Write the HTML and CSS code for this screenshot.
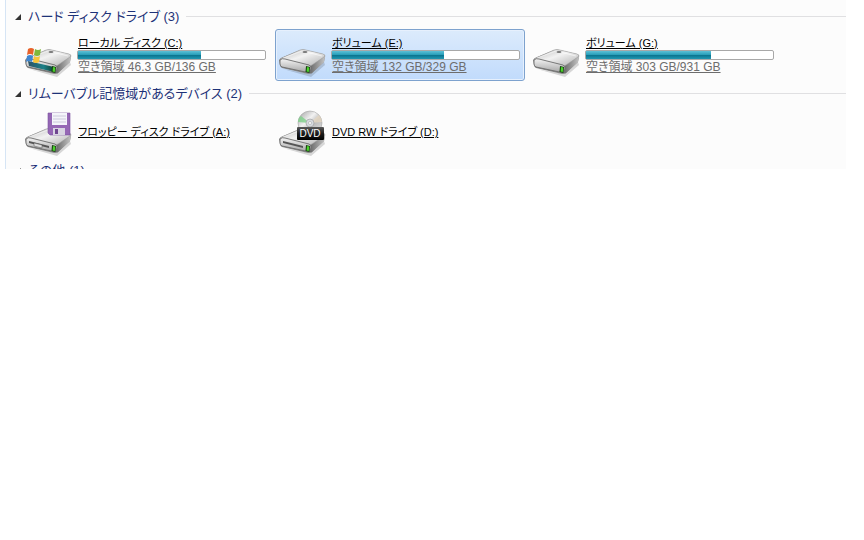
FILE: index.html
```html
<!DOCTYPE html>
<html lang="ja">
<head>
  <meta charset="UTF-8" />
  <meta name="viewport" content="width=device-width, initial-scale=1" />
  <title>コンピューター</title>
  <link rel="stylesheet" href="styles.css">
</head>
<body>
  <!-- shared icon parts -->
  <svg class="defs" width="0" height="0" aria-hidden="true">
    <defs>
      <linearGradient id="top" x1="0" y1="0" x2="1" y2="1">
        <stop offset="0" stop-color="#b4b4b4" />
        <stop offset="0.45" stop-color="#f2f2f2" />
        <stop offset="1" stop-color="#b0b0b0" />
      </linearGradient>
      <linearGradient id="front" x1="0" y1="0" x2="0" y2="1">
        <stop offset="0" stop-color="#f4f4f4" />
        <stop offset="1" stop-color="#a2a2a2" />
      </linearGradient>
      <linearGradient id="side" x1="0" y1="0" x2="1" y2="0">
        <stop offset="0" stop-color="#6a6a6a" />
        <stop offset="1" stop-color="#c4c4c4" />
      </linearGradient>
      <linearGradient id="glass" x1="0" y1="0" x2="1" y2="0">
        <stop offset="0" stop-color="#2b5268" />
        <stop offset="0.6" stop-color="#1c8087" />
        <stop offset="1" stop-color="#123e32" />
      </linearGradient>
      <linearGradient id="disc" x1="0" y1="0" x2="1" y2="1">
        <stop offset="0" stop-color="#9c9c9c" />
        <stop offset="0.4" stop-color="#f2f2f2" />
        <stop offset="0.6" stop-color="#bcbcbc" />
        <stop offset="1" stop-color="#e4e4e4" />
      </linearGradient>
      <linearGradient id="label" x1="0" y1="0" x2="0" y2="1">
        <stop offset="0" stop-color="#5a5a5a" />
        <stop offset="0.5" stop-color="#1c1c1c" />
        <stop offset="1" stop-color="#000" />
      </linearGradient>
      <g id="drive">
        <path d="M5 38 L33 46 L47 34 L46 31 L32 43Z" fill="#000" opacity="0.15" />
        <path d="M1 29 Q2 27 5 26 L22 19 Q25 18 28 19 L45 23 Q48 24 47 26 L46 31 L34 42 Q32 43 30 43 L4 37 Q2 36 2 34Z" fill="#8c8c8c" />
        <path d="M33 35 L47 25 L46 31 L34 42 Q33 43 32 42Z" fill="url(#side)" />
        <path d="M2 28 L22 19 Q25 18 28 19 L45 23 Q48 24 46 26 L34 34 Q32 35 30 35 L4 30Z" fill="url(#top)" stroke="#9a9a9a" stroke-width="0.5" />
        <path d="M5 27 L24 20 L44 25" fill="none" stroke="#fff" stroke-width="0.8" opacity="0.7" />
        <ellipse cx="27" cy="21" rx="2.5" ry="1" fill="#777" />
        <path d="M2 29 Q4 27 7 28 L31 34 Q33 35 33 37 L32 42 L4 36 Q2 35 2 33Z" fill="url(#front)" stroke="#6c6c6c" stroke-width="0.9" />
      </g>
      <g id="lamp">
        <path d="M28 35 L32 36 L31.5 42 L27.5 41Z" fill="#17420f" />
        <path d="M29 36 L31.2 36.5 L30.8 41 L28.6 40.5Z" fill="#4bd32c" />
      </g>
    </defs>
  </svg>

  <main class="pane">
    <section class="group">
      <div class="group-header">
        <button class="toggle" type="button" aria-label="折りたたむ" aria-expanded="true">
          <svg width="6" height="6" viewBox="0 0 6 6"><path d="M6 0 V6 H0Z" fill="#333" /></svg>
        </button>
        <h2>ハード ディスク ドライブ (3)</h2>
        <span class="rule"></span>
      </div>
      <ul class="tiles">
        <li>
          <a class="tile" href="#c">
            <svg class="icon" viewBox="0 0 48 48">
              <use href="#drive" />
              <path d="M4 30 L30 36 L30 41 L5 35Z" fill="url(#glass)" />
              <use href="#lamp" />
              <path d="M4 18 Q7 16 10 18 L9 24 Q6 22 3 24Z" fill="#e8622a" />
              <path d="M11 18 Q14 20 17 18 L16 24 Q13 26 10 24Z" fill="#7fb83a" />
              <path d="M3 25 Q6 23 9 25 L8 31 Q5 29 2 31Z" fill="#3f86d0" />
              <path d="M10 25 Q13 27 16 25 L15 31 Q12 33 9 31Z" fill="#f7c53a" />
            </svg>
            <span class="info">
              <span class="name">ローカル ディスク (C:)</span>
              <span class="bar"><span class="used" style="width: 66%"></span></span>
              <span class="free">空き領域 46.3 GB/136 GB</span>
            </span>
          </a>
        </li>
        <li>
          <a class="tile selected" href="#e">
            <svg class="icon" viewBox="0 0 48 48">
              <use href="#drive" />
              <use href="#lamp" />
            </svg>
            <span class="info">
              <span class="name">ボリューム (E:)</span>
              <span class="bar"><span class="used" style="width: 60%"></span></span>
              <span class="free">空き領域 132 GB/329 GB</span>
            </span>
          </a>
        </li>
        <li>
          <a class="tile" href="#g">
            <svg class="icon" viewBox="0 0 48 48">
              <use href="#drive" />
              <use href="#lamp" />
            </svg>
            <span class="info">
              <span class="name">ボリューム (G:)</span>
              <span class="bar"><span class="used" style="width: 67%"></span></span>
              <span class="free">空き領域 303 GB/931 GB</span>
            </span>
          </a>
        </li>
      </ul>
    </section>

    <section class="group">
      <div class="group-header">
        <button class="toggle" type="button" aria-label="折りたたむ" aria-expanded="true">
          <svg width="6" height="6" viewBox="0 0 6 6"><path d="M6 0 V6 H0Z" fill="#333" /></svg>
        </button>
        <h2>リムーバブル記憶域があるデバイス (2)</h2>
        <span class="rule"></span>
      </div>
      <ul class="tiles">
        <li>
          <a class="tile" href="#a">
            <svg class="icon" viewBox="0 0 48 48">
              <g transform="translate(0 2)">
                <use href="#drive" />
                <path d="M5 31 L25 36 L25 38 L5 33Z" fill="#555" />
                <path d="M10 33 L18 35 L18 38 L10 36Z" fill="#ddd" stroke="#555" stroke-width="0.5" />
                <use href="#lamp" />
              </g>
              <path d="M24 5 H46 V27 H26 L24 25Z" fill="#9567b5" stroke="#7a50a0" stroke-width="0.6" />
              <path d="M28 5 H43 V17 H28Z" fill="#f4f4fa" />
              <path d="M29 8 H42 M29 11 H42 M29 14 H42" stroke="#c3bfd4" stroke-width="0.8" />
              <path d="M29 20 H41 V27 H29Z" fill="#d8d4e2" />
              <path d="M31 21 H34 V26 H31Z" fill="#6f4590" />
            </svg>
            <span class="info">
              <span class="name">フロッピー ディスク ドライブ (A:)</span>
            </span>
          </a>
        </li>
        <li>
          <a class="tile" href="#d">
            <svg class="icon" viewBox="0 0 48 48">
              <g transform="translate(0 2)">
                <use href="#drive" />
                <path d="M5 31 L25 36 L25 38 L5 33Z" fill="#555" />
                <use href="#lamp" />
              </g>
              <circle cx="32" cy="15" r="12" fill="url(#disc)" stroke="#a5a5a5" stroke-width="0.6" />
              <path d="M32 15 L20 14 Q20 10 23 8Z" fill="#7ed08a" opacity="0.8" />
              <path d="M32 15 L41 7 Q44 10 44 14Z" fill="#e8d8c0" opacity="0.7" />
              <circle cx="32" cy="15" r="4" fill="#d5d9de" stroke="#999" stroke-width="0.6" />
              <circle cx="32" cy="15" r="1.5" fill="#fff" stroke="#999" stroke-width="0.5" />
              <rect x="19" y="19" width="27" height="13" rx="1" fill="url(#label)" />
              <text class="icon-label" x="32" y="29" text-anchor="middle">DVD</text>
            </svg>
            <span class="info">
              <span class="name">DVD RW ドライブ (D:)</span>
            </span>
          </a>
        </li>
      </ul>
    </section>

    <section class="group cut">
      <div class="group-header">
        <button class="toggle" type="button" aria-label="折りたたむ" aria-expanded="true">
          <svg width="6" height="6" viewBox="0 0 6 6"><path d="M6 0 V6 H0Z" fill="#333" /></svg>
        </button>
        <h2>その他 (1)</h2>
      </div>
    </section>
  </main>
</body>
</html>
```
FILE: styles.css
```css
body {
  margin: 0;
  background-color: #fff;
  font-family: "Liberation Sans", "Noto Sans CJK JP", sans-serif;
  font-size: 12px;
  font-feature-settings: "palt";
}

.defs {
  position: absolute;
}

.pane {
  margin: 0 18px 0 5px;
  padding-top: 4px;
  border-left: 1px solid #d6e5f5;
  background-color: #fcfcfc;
}

.group-header {
  display: flex;
  align-items: center;
  height: 25px;
  padding-left: 9px;
}

.group-header h2 {
  margin: 0 7px 0 7px;
  color: #1e3278;
  font-size: 13px;
  font-weight: normal;
  line-height: 24px;
  white-space: nowrap;
}

.toggle {
  display: flex;
  padding: 0;
  border: 0;
  background: none;
}

.rule {
  flex: 1;
  height: 1px;
  background-color: #e0e0e2;
}

/* last group runs off the bottom of the pane */
.cut {
  height: 11px;
  overflow: hidden;
}

.tiles {
  display: flex;
  flex-wrap: wrap;
  gap: 0 4px;
  margin: 0;
  padding: 0 0 0 15px;
  list-style: none;
}

.tile {
  display: flex;
  align-items: center;
  box-sizing: border-box;
  width: 250px;
  height: 52px;
  padding: 0 4px 0 2px;
  border: 1px solid transparent;
  border-radius: 3px;
  color: #000;
  text-decoration: none;
}

.selected {
  border-color: #7da2ce;
  background: linear-gradient(#dcebfc, #c1dbfc);
  box-shadow: inset 0 0 0 1px #e6f0fd;
}

.icon {
  width: 48px;
  height: 48px;
}

.icon-label {
  fill: #fff;
  font-size: 10px;
}

.info {
  flex: 1;
  margin-left: 5px;
}

.name,
.free {
  display: block;
  padding-left: 1px;
  line-height: 14px;
  text-decoration: underline;
  white-space: nowrap;
}

.name {
  font-size: 11px;
}

.free {
  color: #6d6d6d;
}

.bar {
  display: block;
  box-sizing: border-box;
  height: 10px;
  border: 1px solid #a8a8a8;
  border-radius: 2px;
  background-color: #fff;
}

.used {
  display: block;
  height: 100%;
  background: linear-gradient(#5cc0d6, #2a9fba 45%, #0b7590 55%, #1f97b2);
}
```
